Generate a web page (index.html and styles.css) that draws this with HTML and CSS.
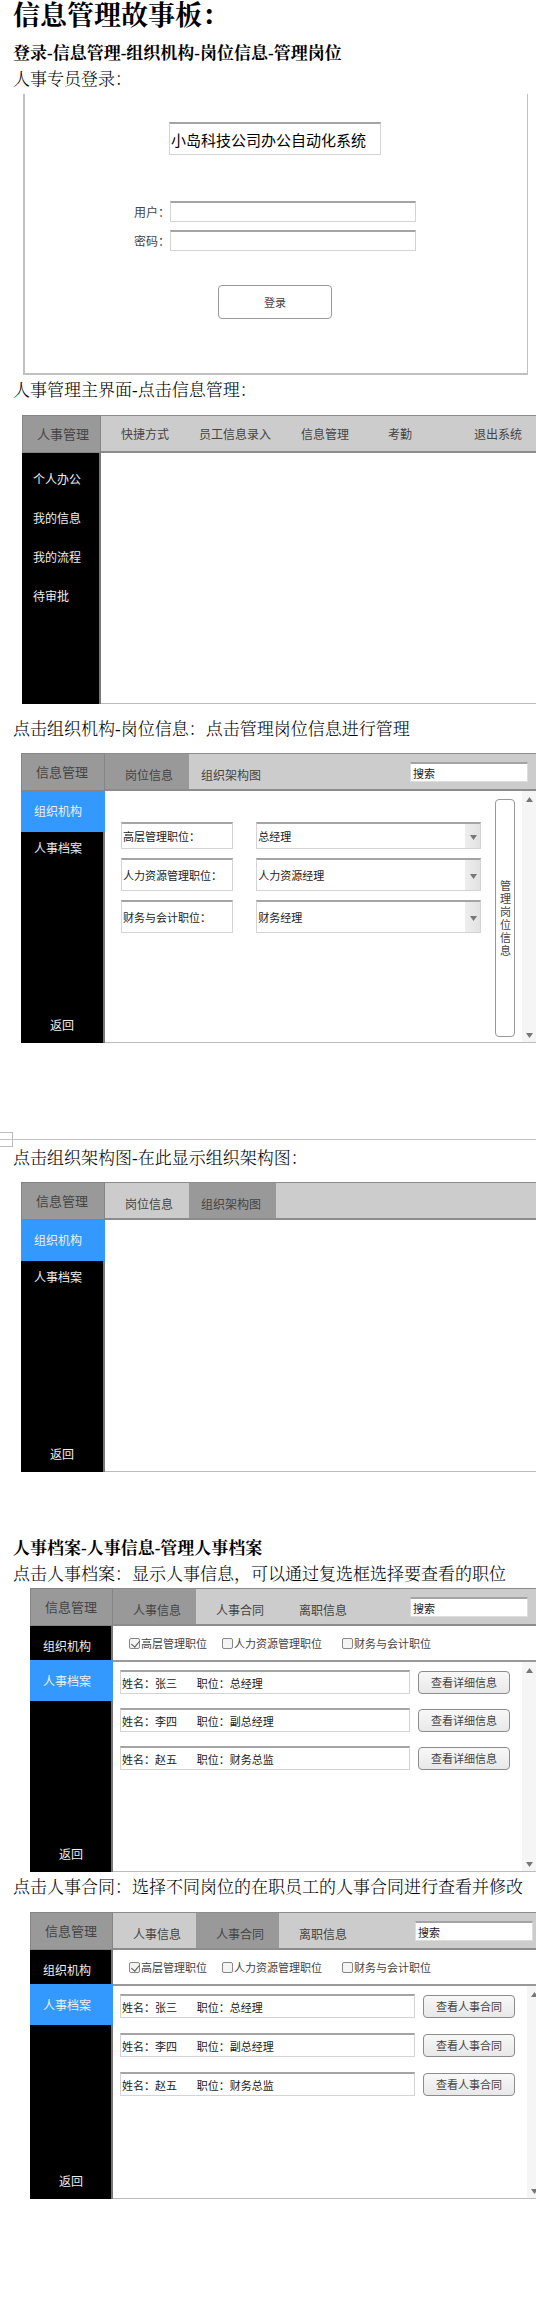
FILE: index.html
```html
<!DOCTYPE html>
<html lang="zh-CN">
<head>
<meta charset="utf-8">
<meta name="viewport" content="width=device-width, initial-scale=1">
<title>信息管理故事板</title>
<link rel="stylesheet" href="styles.css">
</head>
<body>
<main class="doc">
  <h1 class="title">信息管理故事板：</h1>

  <section class="story">
    <h2 class="heading">登录-信息管理-组织机构-岗位信息-管理岗位</h2>
    <p class="note">人事专员登录：</p>
    <form class="login">
      <input class="field login-name" type="text" value="小岛科技公司办公自动化系统" aria-label="系统名称">
      <div class="login-fields">
        <label for="user">用户：</label><input class="field" id="user" type="text">
        <label for="pass">密码：</label><input class="field" id="pass" type="password">
      </div>
      <button class="login-button" type="button">登录</button>
    </form>

    <p class="note note-home">人事管理主界面-点击信息管理：</p>
    <div class="app app-home">
      <div class="app-title">人事管理</div>
      <nav class="bar menu">
        <a href="#">快捷方式</a><a href="#">员工信息录入</a><a href="#">信息管理</a><a class="attendance" href="#">考勤</a><a class="exit" href="#">退出系统</a>
      </nav>
      <nav class="side side-home">
        <a href="#">个人办公</a><a href="#">我的信息</a><a href="#">我的流程</a><a href="#">待审批</a>
      </nav>
      <div class="content"></div>
    </div>

    <p class="note note-posts">点击组织机构-岗位信息：点击管理岗位信息进行管理</p>
    <div class="app app-org">
      <div class="app-title">信息管理</div>
      <div class="bar">
        <nav class="tabs"><a class="tab active" href="#">岗位信息</a><a class="tab tab-chart" href="#">组织架构图</a></nav>
        <input class="search" type="text" value="搜索" aria-label="搜索">
      </div>
      <nav class="side">
        <a class="item active" href="#">组织机构</a><a class="item" href="#">人事档案</a><a class="back" href="#">返回</a>
      </nav>
      <div class="content posts">
        <div class="post-list">
          <input class="field" type="text" value="高层管理职位：" aria-label="职位类别一">
          <div class="drop"><select class="field" aria-label="高层管理职位"><option>总经理</option></select><svg class="caret" viewBox="0 0 7 5"><path d="M0 0h7L3.500 5z"/></svg></div>
          <input class="field" type="text" value="人力资源管理职位：" aria-label="职位类别二">
          <div class="drop"><select class="field" aria-label="人力资源管理职位"><option>人力资源经理</option></select><svg class="caret" viewBox="0 0 7 5"><path d="M0 0h7L3.500 5z"/></svg></div>
          <input class="field" type="text" value="财务与会计职位：" aria-label="职位类别三">
          <div class="drop"><select class="field" aria-label="财务与会计职位"><option>财务经理</option></select><svg class="caret" viewBox="0 0 7 5"><path d="M0 0h7L3.500 5z"/></svg></div>
        </div>
        <button class="manage" type="button">管理岗位信息</button>
        <div class="scroll"><svg viewBox="0 0 7 5"><path d="M0 5h7L3.500 0z"/></svg><svg viewBox="0 0 7 5"><path d="M0 0h7L3.500 5z"/></svg></div>
      </div>
    </div>

    <div class="page-break"><span class="page-corner"></span></div>

    <p class="note">点击组织架构图-在此显示组织架构图：</p>
    <div class="app app-org">
      <div class="app-title">信息管理</div>
      <div class="bar">
        <nav class="tabs"><a class="tab" href="#">岗位信息</a><a class="tab tab-chart active" href="#">组织架构图</a></nav>
      </div>
      <nav class="side">
        <a class="item active" href="#">组织机构</a><a class="item" href="#">人事档案</a><a class="back" href="#">返回</a>
      </nav>
      <div class="content"></div>
    </div>
  </section>

  <section class="story story-files">
    <h2 class="heading">人事档案-人事信息-管理人事档案</h2>
    <p class="note">点击人事档案：显示人事信息，可以通过复选框选择要查看的职位</p>
    <div class="app app-files">
      <div class="app-title">信息管理</div>
      <div class="bar">
        <nav class="tabs"><a class="tab active" href="#">人事信息</a><a class="tab" href="#">人事合同</a><a class="tab" href="#">离职信息</a></nav>
        <input class="search" type="text" value="搜索" aria-label="搜索">
      </div>
      <nav class="side">
        <a class="item" href="#">组织机构</a><a class="item active" href="#">人事档案</a><a class="back" href="#">返回</a>
      </nav>
      <div class="content files">
        <div class="filters">
          <label><input type="checkbox" checked>高层管理职位</label>
          <label><input type="checkbox">人力资源管理职位</label>
          <label><input type="checkbox">财务与会计职位</label>
        </div>
        <div class="people">
          <div class="rows">
            <input class="field" type="text" value="姓名：张三        职位：总经理" aria-label="员工一"><button class="view" type="button">查看详细信息</button>
            <input class="field" type="text" value="姓名：李四        职位：副总经理" aria-label="员工二"><button class="view" type="button">查看详细信息</button>
            <input class="field" type="text" value="姓名：赵五        职位：财务总监" aria-label="员工三"><button class="view" type="button">查看详细信息</button>
          </div>
          <div class="scroll"><svg viewBox="0 0 7 5"><path d="M0 5h7L3.500 0z"/></svg><svg viewBox="0 0 7 5"><path d="M0 0h7L3.500 5z"/></svg></div>
        </div>
      </div>
    </div>

    <p class="note note-contract">点击人事合同：选择不同岗位的在职员工的人事合同进行查看并修改</p>
    <div class="app app-files app-contract">
      <div class="app-title">信息管理</div>
      <div class="bar">
        <nav class="tabs"><a class="tab" href="#">人事信息</a><a class="tab active" href="#">人事合同</a><a class="tab" href="#">离职信息</a></nav>
        <input class="search" type="text" value="搜索" aria-label="搜索">
      </div>
      <nav class="side">
        <a class="item" href="#">组织机构</a><a class="item active" href="#">人事档案</a><a class="back" href="#">返回</a>
      </nav>
      <div class="content files">
        <div class="filters">
          <label><input type="checkbox" checked>高层管理职位</label>
          <label><input type="checkbox">人力资源管理职位</label>
          <label><input type="checkbox">财务与会计职位</label>
        </div>
        <div class="people">
          <div class="rows">
            <input class="field" type="text" value="姓名：张三        职位：总经理" aria-label="员工一"><button class="view" type="button">查看人事合同</button>
            <input class="field" type="text" value="姓名：李四        职位：副总经理" aria-label="员工二"><button class="view" type="button">查看人事合同</button>
            <input class="field" type="text" value="姓名：赵五        职位：财务总监" aria-label="员工三"><button class="view" type="button">查看人事合同</button>
          </div>
          <div class="scroll"><svg viewBox="0 0 7 5"><path d="M0 5h7L3.500 0z"/></svg><svg viewBox="0 0 7 5"><path d="M0 0h7L3.500 5z"/></svg></div>
        </div>
      </div>
    </div>
  </section>
</main>
</body>
</html>
```
FILE: styles.css
```css
* {
  box-sizing: border-box;
}

body {
  margin: 0;
  background: #fff;
  color: #000;
  font-family: "Liberation Serif", "Noto Serif CJK SC", "Noto Sans CJK SC", serif;
}

.doc {
  overflow: hidden;
  padding-bottom: 108px;
}

.title,
.heading,
.note {
  margin: 0 0 0 13px;
  white-space: nowrap;
}

.title {
  margin-bottom: 8px;
  font-size: 27px;
  line-height: 32px;
}

.heading,
.note {
  padding-top: 2px;
  font-size: 17px;
  line-height: 24px;
}

.note {
  font-weight: 300;
}

.note-home,
.note-contract {
  margin-top: 2px;
}

.note-posts {
  margin-top: 12px;
}

/* Mock-up controls */

.login,
.app,
.app input,
.app select,
.app button,
.login input,
.login button {
  font-family: "Noto Sans CJK SC", sans-serif;
}

a {
  color: inherit;
  text-decoration: none;
}

.field {
  width: 100%;
  min-width: 0;
  margin: 0;
  padding: 0 1px;
  border: 1px solid #d4d4d4;
  border-top: 2px solid #a4a4a4;
  border-radius: 0;
  background: #fff;
  color: #222;
  font-size: 11px;
}

/* Login */

.login {
  display: flex;
  flex-direction: column;
  align-items: center;
  height: 281px;
  margin: 2px 8px 0 23px;
  padding: 28px 2px 0 0;
  border: solid #c0c0c0;
  border-width: 0 1px 2px 2px;
}

.login-name {
  width: 212px;
  height: 33px;
  color: #000;
  font-size: 15px;
}

.login-fields {
  display: grid;
  grid-template-columns: 36px 246px;
  row-gap: 8px;
  align-items: center;
  margin: 46px 0 34px;
  color: #444;
  font-size: 12px;
  line-height: 21px;
  white-space: nowrap;
}

.login-fields .field {
  height: 21px;
}

.login-button {
  width: 114px;
  height: 34px;
  padding: 0;
  border: 1px solid #999;
  border-radius: 4px;
  background: #fff;
  color: #444;
  font-size: 11px;
}

/* Application frame */

.app {
  display: grid;
  grid-template-columns: 84px 1fr;
  grid-template-rows: 38px 1fr;
  height: 290px;
  margin: 11px 0 0 21px;
  font-size: 12px;
}

.app-title {
  padding-left: 14px;
  border: 1px solid #858585;
  background: #999;
  color: #444;
  font-size: 13px;
  line-height: 36px;
}

.bar {
  display: flex;
  justify-content: space-between;
  border: solid #8c8c8c;
  border-width: 1px 0 2px;
  background: #ccc;
  color: #444;
}

.tabs {
  display: flex;
}

.tab {
  width: 84px;
  padding-left: 20px;
  line-height: 41px;
  height: 35px;
}

.tab-chart {
  width: 87px;
  padding-left: 12px;
}

.tab.active {
  background: #999;
}

.search {
  width: 118px;
  height: 20px;
  margin: 8px 8px 0 0;
  padding: 0 2px;
  border: 1px solid #ddd;
  border-top: 2px solid #a4a4a4;
  background: #fff;
  color: #222;
  font-size: 11px;
}

.side {
  display: flex;
  flex-direction: column;
  border-right: 2px solid #777;
  background: #000;
  color: #eee;
}

.content {
  border-bottom: 1px solid #bbb;
}

.item {
  height: 41px;
  padding-left: 13px;
  line-height: 40px;
}

.item + .item {
  line-height: 32px;
}

.item.active {
  margin-right: -2px;
  background: #39f;
}

.back {
  margin-top: auto;
  padding-left: 29px;
  line-height: 36px;
}

/* Home */

.app-home {
  grid-template-columns: 79px 1fr;
  height: 289px;
  margin: 12px 0 0 22px;
}

.menu {
  justify-content: flex-start;
  padding: 0 14px 0 20px;
  gap: 30px;
  line-height: 35px;
  white-space: nowrap;
}

.attendance {
  margin-left: 9px;
}

.exit {
  margin-left: auto;
}

.side-home {
  gap: 22px;
  padding: 17px 0 0 11px;
  line-height: 17px;
}

/* Posts */

.posts {
  display: flex;
}

.post-list {
  display: grid;
  flex: 1;
  grid-template-columns: 1fr 2fr;
  grid-template-rows: 27px 33px 33px;
  gap: 9px 23px;
  align-content: start;
  padding: 31px 14px 0 16px;
}

.drop {
  position: relative;
  display: flex;
}

.drop .field {
  appearance: none;
  background: linear-gradient(90deg, #eee, #e2e2e2) right / 15px 100% no-repeat #fff;
}

.caret {
  position: absolute;
  right: 4px;
  top: calc(50% - 1px);
  width: 7px;
  height: 5px;
  fill: #777;
}

.manage {
  width: 20px;
  margin: 8px 7px 5px 0;
  padding: 0 4px;
  border: 1px solid #999;
  border-radius: 4px;
  background: #fff;
  color: #444;
  font-size: 11px;
  line-height: 13px;
}

.scroll {
  display: flex;
  flex-direction: column;
  justify-content: space-between;
  align-items: center;
  width: 14px;
  padding: 6px 0 4px;
  background: #f5f5f5;
}

.scroll svg {
  width: 7px;
  height: 5px;
  fill: #777;
}

.page-break {
  position: relative;
  height: 13px;
  margin-top: 89px;
  background: linear-gradient(#c4c4c4, #c4c4c4) 0 7px / 100% 1px no-repeat;
}

.page-corner {
  position: absolute;
  left: 0;
  top: 0;
  width: 13px;
  height: 15px;
  border: 1px solid #bbb;
  border-left: 0;
}

/* Files */

.story-files {
  margin-top: 63px;
}

.app-files {
  grid-template-columns: 83px 1fr;
  height: 284px;
  margin: 1px 0 0 30px;
}

.app-files .tab {
  width: 83px;
}

.app-files .item:first-child {
  height: 34px;
}

.app-files .item.active {
  line-height: 42px;
}

.files {
  display: flex;
  flex-direction: column;
}

.filters {
  display: flex;
  height: 36px;
  padding: 0 0 0 16px;
  border-bottom: 2px solid #999;
  color: #444;
  font-size: 11px;
  line-height: 36px;
  white-space: nowrap;
}

.filters label {
  display: flex;
  align-items: center;
  gap: 1px;
  margin-right: 15px;
}

.filters label:nth-child(2) {
  margin-right: 20px;
}

.filters input {
  appearance: none;
  width: 11px;
  height: 11px;
  margin: 0;
  border: 1px solid #888;
  border-radius: 2px;
  background: #f4f4f4;
}

.filters input:checked::before {
  content: "";
  display: block;
  width: 4px;
  height: 7px;
  margin: 0 0 0 3px;
  border: solid #555;
  border-width: 0 1px 1px 0;
  transform: rotate(40deg);
}

.people {
  display: flex;
  flex: 1;
}

.rows {
  display: grid;
  flex: 1;
  grid-template-columns: 1fr 92px;
  grid-auto-rows: 24px;
  align-content: start;
  align-items: center;
  gap: 14px 8px;
  padding: 8px 12px 0 7px;
}

.rows .field {
  height: 24px;
}

.view {
  height: 23px;
  padding: 0;
  border: 1px solid #8c8c8c;
  border-radius: 4px;
  background: linear-gradient(#f8f8f8, #e8e8e8);
  color: #444;
  font-size: 11px;
}

/* This frame runs slightly past the page edge */
.app-contract {
  height: 287px;
  margin: 12px -5px 0 30px;
}

.app-contract .rows {
  row-gap: 15px;
}
```
